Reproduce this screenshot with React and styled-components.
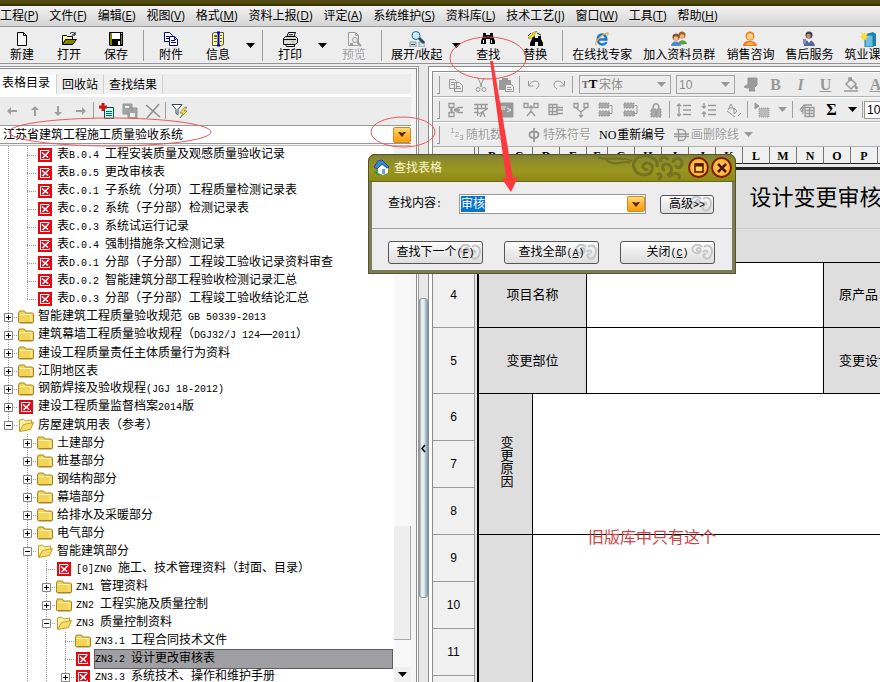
import { useEffect, useRef } from "react";
import styled, { createGlobalStyle, css } from "styled-components";

const menuItems = [
  ["工程", "P"],
  ["文件", "F"],
  ["编辑", "E"],
  ["视图", "V"],
  ["格式", "M"],
  ["资料上报", "D"],
  ["评定", "A"],
  ["系统维护", "S"],
  ["资料库", "L"],
  ["技术工艺", "J"],
  ["窗口", "W"],
  ["工具", "T"],
  ["帮助", "H"],
];

const toolItems = [
  { icon: "new", label: "新建" },
  { icon: "open", label: "打开" },
  { icon: "save", label: "保存" },
  "sep",
  { icon: "attach", label: "附件" },
  { icon: "info", label: "信息" },
  "arrow",
  "sep",
  { icon: "print", label: "打印" },
  "arrow",
  { icon: "preview", label: "预览", disabled: true },
  "sep",
  { icon: "expand", label: "展开/收起" },
  "arrow",
  { icon: "find", label: "查找" },
  { icon: "replace", label: "替换" },
  "sep",
  { icon: "ie", label: "在线找专家" },
  { icon: "group", label: "加入资料员群" },
  { icon: "sales", label: "销售咨询" },
  { icon: "service", label: "售后服务" },
  { icon: "course", label: "筑业课堂" },
];

const treeRows = [
  { depth: 1, guides: [0], kind: "form", label: "表B.0.4 工程安装质量及观感质量验收记录" },
  { depth: 1, guides: [0], kind: "form", label: "表B.0.5 更改审核表" },
  { depth: 1, guides: [0], kind: "form", label: "表C.0.1 子系统（分项）工程质量检测记录表" },
  { depth: 1, guides: [0], kind: "form", label: "表C.0.2 系统（子分部）检测记录表" },
  { depth: 1, guides: [0], kind: "form", label: "表C.0.3 系统试运行记录" },
  { depth: 1, guides: [0], kind: "form", label: "表C.0.4 强制措施条文检测记录" },
  { depth: 1, guides: [0], kind: "form", label: "表D.0.1 分部（子分部）工程竣工验收记录资料审查" },
  { depth: 1, guides: [0], kind: "form", label: "表D.0.2 智能建筑分部工程验收检测记录汇总" },
  { depth: 1, guides: [0], kind: "form", last: true, label: "表D.0.3 分部（子分部）工程竣工验收结论汇总" },
  { depth: 0, kind: "folder", toggle: "+", label: "智能建筑工程质量验收规范 GB 50339-2013" },
  { depth: 0, kind: "folder", toggle: "+", label: "建筑幕墙工程质量验收规程（DGJ32/J 124—2011）" },
  { depth: 0, kind: "folder", toggle: "+", label: "建设工程质量责任主体质量行为资料" },
  { depth: 0, kind: "folder", toggle: "+", label: "江阴地区表" },
  { depth: 0, kind: "folder", toggle: "+", label: "钢筋焊接及验收规程(JGJ 18-2012)" },
  { depth: 0, kind: "form", toggle: "+", label: "建设工程质量监督档案2014版" },
  { depth: 0, kind: "opened", toggle: "-", last: true, label: "房屋建筑用表（参考）" },
  { depth: 1, kind: "folder", toggle: "+", label: "土建部分" },
  { depth: 1, kind: "folder", toggle: "+", label: "桩基部分" },
  { depth: 1, kind: "folder", toggle: "+", label: "钢结构部分" },
  { depth: 1, kind: "folder", toggle: "+", label: "幕墙部分" },
  { depth: 1, kind: "folder", toggle: "+", label: "给排水及采暖部分" },
  { depth: 1, kind: "folder", toggle: "+", label: "电气部分" },
  { depth: 1, kind: "opened", toggle: "-", label: "智能建筑部分" },
  { depth: 2, guides: [1], kind: "form", label: "[0]ZN0 施工、技术管理资料（封面、目录）" },
  { depth: 2, guides: [1], kind: "folder", toggle: "+", label: "ZN1 管理资料" },
  { depth: 2, guides: [1], kind: "folder", toggle: "+", label: "ZN2 工程实施及质量控制" },
  { depth: 2, guides: [1], kind: "opened", toggle: "-", label: "ZN3 质量控制资料" },
  { depth: 3, guides: [1, 2], kind: "folder", label: "ZN3.1 工程合同技术文件" },
  { depth: 3, guides: [1, 2], kind: "form", selected: true, label: "ZN3.2 设计更改审核表" },
  { depth: 3, guides: [1, 2], kind: "form", toggle: "+", label: "ZN3.3 系统技术、操作和维护手册" },
];

const letters = "BCDEFGHIJKLMNOP";
const columnCount = 26;
const columns = Array.from({ length: columnCount }, (_, index) => letters[index] || "");

const bigIcons = {
  new: <path d="M3.5 1.5h6l3 3v10h-9zM9.500 1.500v3h3" fill="#fff" stroke="#000" />,
  open: (
    <g stroke="#000" strokeWidth="1">
      <path d="M1.500 13.500v-9h4l1 1h5v3" fill="#ffff9c" />
      <path d="M1.500 13.500l3-5h11l-4 5z" fill="#848400" />
      <path d="M9 2.500c2-1.500 4-1.500 5 1m0-2.500v3h-3" fill="none" />
    </g>
  ),
  save: (
    <g>
      <path d="M1 1h14v14H2l-1-1z" fill="#000" />
      <path d="M2 2h2v7H2zM13 4h1v9h-1zM2 9h2v5H2z" fill="#848400" />
      <path d="M4 2h8v6H4z" fill="#fff" />
      <path d="M10 10h2v4h-2z" fill="#fff" />
      <path d="M13 2h1v1h-1z" fill="#c0c0c0" />
    </g>
  ),
  attach: (
    <g fill="#fff" stroke="#000084">
      <path d="M1.500 1.500h5l3 3v6h-8z" />
      <path d="M3 5.500h3M3 7.500h4" />
      <path d="M6.500 5.500h5l3 3v6h-8z" />
      <path d="M8 9.500h4M8 11.500h5M11.500 6v2.500h2" />
    </g>
  ),
  info: (
    <g>
      <path d="M2.500 2.500l2-1h9v12l-2 1h-9z" fill="#ffff7c" stroke="#555" />
      <path d="M4 4h3v2H4zM4 7h3v1H4zM4 10h3v1H4zM10 4h2v1h-2zM10 7h2v1h-2zM10 10h2v1h-2z" fill="#666" />
      <path d="M8.500 1v14M7 1.500h3M7 14.500h3" stroke="#0000c8" strokeWidth="2" />
    </g>
  ),
  print: (
    <g stroke="#000">
      <path d="M4.500 6.500l2-5h7l-2 5z" fill="#fff" />
      <path d="M7 3.500h4M6.500 5h4" strokeWidth=".7" />
      <path d="M1.500 7.500l2-2h10l2 2v4l-2 2h-12z" fill="#d8d8d0" />
      <path d="M2 8.500h12M3.500 13.500h9v2h-8z" fill="#fff" />
      <path d="M10 11h2" stroke="#b8a800" strokeWidth="1" />
    </g>
  ),
  preview: (
    <g fill="none" stroke="#9c9c9c">
      <path d="M2.500 1.500h7l3 3v10h-10zM9.500 1.500v3h3" />
      <circle cx="9" cy="9" r="2.500" />
      <path d="M11 11l4 4M4 13h3" strokeWidth="2" />
    </g>
  ),
  expand: (
    <g>
      <path d="M1 11h6v5H1zM10 11h6v5h-6z" fill="#d5e5ec" stroke="#7f97a8" />
      <path d="M2 13.500h4" stroke="#345" />
      <path d="M10 7l5 5" stroke="#28485c" strokeWidth="3" />
      <circle cx="7" cy="4.500" r="4" fill="#bfefff" stroke="#315f80" />
      <path d="M5 4c0-1 1-2 2-2" stroke="#fff" fill="none" />
    </g>
  ),
  find: (
    <path d="M3 2h3v2h4V2h3v3l2 5v3h-5V8H6v5H1v-3l2-5zM3 9v3h1V9zM11 9v3h1V9z" fill="#000" fillRule="evenodd" />
  ),
  replace: (
    <g>
      <path d="M5 5h3v2h3V5h3v3l2 4v3h-5v-4H8v4H3v-3l2-4z" fill="#000" />
      <path d="M1 7l5-4-1-1 5-2-3 4 1 1-5 3z" fill="#f8ec00" stroke="#706800" strokeWidth=".5" />
      <path d="M10 2l4 2M1 5l3-3" stroke="#222" />
    </g>
  ),
  ie: (
    <g fill="none">
      <path d="M3.800 8.500h8.500C12 5 10.500 3.500 8 3.500 5.500 3.500 3.800 5.500 3.800 8.500s2 5 4.400 5c2 0 3.500-.8 4-2.500" stroke="#1b78d8" strokeWidth="2.600" />
      <path d="M2.500 14c-2 0-.5-5 5-9s8-4 6-1" stroke="#efb335" strokeWidth="1.300" />
    </g>
  ),
  group: (
    <g>
      <circle cx="11" cy="4" r="3.500" fill="#a0622b" />
      <circle cx="11" cy="5.500" r="2.300" fill="#f0b377" />
      <path d="M7 14c0-6 8-6 9-1z" fill="#5ea43c" />
      <circle cx="5" cy="6" r="3.500" fill="#88502b" />
      <circle cx="5" cy="7.500" r="2.300" fill="#f5bd8b" />
      <path d="M0 15c0-6 9-6 10 0z" fill="#4d8bd0" />
    </g>
  ),
  sales: (
    <g>
      <circle cx="8" cy="5" r="4.500" fill="#ef7b1c" />
      <circle cx="8" cy="5.500" r="3.200" fill="#ffd18d" />
      <path d="M1 15c0-7 13-7 14 0z" fill="#f47c20" />
      <path d="M4 14c2-4 6-4 8 0z" fill="#ffb765" />
    </g>
  ),
  service: (
    <g>
      <circle cx="8" cy="4" r="3.500" fill="#39404e" />
      <circle cx="7.500" cy="5" r="2.200" fill="#c69066" />
      <path d="M3 15c-1-7 9-9 11 0z" fill="#5367a1" />
      <path d="M6 9l2 3 2-3z" fill="#fff" />
      <path d="M2 8h3v5H2z" fill="#8590b1" />
    </g>
  ),
  course: (
    <g>
      <path d="M6 3l7-2 3 2v12H6z" fill="#1683b5" />
      <path d="M5 4h8v12H5z" fill="#69bddd" stroke="#197ba7" />
      <path d="M4 0l1 3 3-1-2 3 3 1-3 1 1 3-3-2-2 2V7L0 6l2-2-1-3 3 2z" fill="#ffda39" />
    </g>
  ),
};

const smallIcons = {
  copy: <path d="M1.500 2.500h5l2 2v7h-7zM3 5.500h3M3 7.500h4M6.500 5.500h5l3 3v6h-8zM8 9.500h4M8 11.500h5" />,
  cut: (
    <>
      <path d="M5 1l4 9M11 1L7 10" />
      <circle cx="5" cy="12.500" r="2" />
      <circle cx="11" cy="12.500" r="2" />
    </>
  ),
  paste: (
    <>
      <path d="M1 3h3V1h6v2h3v10H1z" fill="#9a9a9a" stroke="none" />
      <path d="M7.500 7.500h6l2 2v5h-8zM9 10.500h4M9 12.500h5" fill="#eee" />
    </>
  ),
  undo: <path d="M2.500 4v5h5M3 8c3-5 9-5 10-1 0 2-1 4-3 5" />,
  redo: <path d="M13.500 4v5h-5M13 8C10 3 4 3 3 7c0 2 1 4 3 5" />,
  brush: <path d="M5 1h9v7l-3 3 1 3H6l1-3H4l-3-1 4-3z" fill="#9a9a9a" />,
  bucket: (
    <>
      <path d="M3 7l5-5 5 5-5 5zM6 4V1h3M1 14h14" strokeWidth="1.500" />
      <path d="M12 8c2 1 3 3 2 4s-2-1-2-4z" fill="#999" />
    </>
  ),
  insertCol: <path d="M1 1.500h5v4H1zM1 10.500h5v4H1zM15 5.500h-5v5h5M6 8h6M6 8l3-2M6 8l3 2M3 7h1v2H3z" strokeWidth="1.300" />,
  grid: <path d="M1 2.500h14M1 6.500h14M1 10.500h5M4.500 2v12M8.500 2v5M12.500 2v5M7 15l3-5 2 5M6 12l8-5" strokeWidth="1.300" />,
  block: (
    <>
      <path d="M1 1h14v14H1z" fill="#999" />
      <path d="M3 5h5M3 7h4M9 6l4 2-4 2" stroke="#eee" />
    </>
  ),
  split: <path d="M1 1.500h4v4H1zM11 1.500h4v4h-4zM8 4v5M6 6l2-2 2 2M8 9l-4 5M8 9l4 5" strokeWidth="1.300" />,
  rows: <path d="M1 2.500h8v10H1zM1 5.500h8M1 9.500h8M4.500 2v11M9 5.500h6M8 8h7M9 11.500h6" strokeWidth="1.300" />,
  merge: <path d="M1 1.500h4v4H1zM11 1.500h4v4h-4zM3 6l5 4 5-4M8 9v6M6 13l2 2 2-2" strokeWidth="1.300" />,
  fill: (
    <>
      <path d="M1 1h10v5H1zM1 9h10v5H1z" fill="#aaa" strokeDasharray="2 1" />
      <path d="M12 3.500h2v8h-3M12 10l-2 2 2 2" />
    </>
  ),
  lock: (
    <>
      <path d="M3 7h10v8H3z" fill="#aaa" strokeDasharray="2 1" />
      <path d="M5 7c0-7 6-7 6 0M8 9v4" strokeWidth="1.500" />
    </>
  ),
  spacing: <path d="M3 2v12M1 4l2-2 2 2M1 12l2 2 2-2M7 3.500h8M7 8h8M7 12.500h8" strokeWidth="1.300" />,
  spacing2: <path d="M3 1v5M3 15v-5M1 4l2 2 2-2M1 12l2-2 2 2M7 3.500h8M7 8h8M7 12.500h8" strokeWidth="1.300" />,
  abc: <path d="M2 8l3-6 3 6M3 6h4M8 12V6l3 3-3 3zM15 11l-3 3M1 9l8 6" />,
  shade: (
    <>
      <path d="M5 6h10v9H5z" fill="#bbb" strokeDasharray="1 1" />
      <path d="M1 1v6l4-3z" fill="#999" />
    </>
  ),
  calc: <path d="M6 5.500h9v9H6zM6 8.500h9M10.500 6v8M6 11.500h9M1 8l4-5h8M2 10l4-6M4 12V6" strokeWidth="1.300" />,
  phi: <path d="M8 1v14M8 4.500C2 4.500 2 11 8 11s6-6.500 0-6.500z" strokeWidth="1.800" />,
  strike: <path d="M4.500 2.500v11h3c6 0 6-11 0-11H3M0 7h15M0 9.500h15" strokeWidth="1.300" />,
  arrowL: <path d="M7 4v3h6v2H7v3L3 8z" fill="#a0a0a0" stroke="none" />,
  arrowU: <path d="M4 7h3v6h2V7h3L8 3z" fill="#a0a0a0" stroke="none" />,
  arrowD: <path d="M4 9h3V3h2v6h3l-4 4z" fill="#a0a0a0" stroke="none" />,
  arrowR: <path d="M9 4v3H3v2h6v3l4-4z" fill="#a0a0a0" stroke="none" />,
  addForm: (
    <>
      <path d="M5.500 4.500h9v11h-9z" fill="#c8f4f0" stroke="#00544c" />
      <path d="M7 8.500h6M7 10.500h6M7 12.500h6" stroke="#006b60" />
      <path d="M4 0v8M0 4h8" stroke="#cc1414" strokeWidth="3" />
    </>
  ),
  copyForm: (
    <>
      <path d="M1 1h9v10H1zM6 5h9v10H6z" fill="#a5a5a5" stroke="#949494" />
      <path d="M3 3h4v2H3zM8 10h5v4H8z" fill="#eee" stroke="none" />
    </>
  ),
  remove: <path d="M1 2l14 12M14 1L2 15" stroke="#8f8f8f" strokeWidth="1.600" />,
  filter: (
    <>
      <path d="M1 1.500h10l-4 5v5l-2-1v-4z" fill="#fff" stroke="#34465a" />
      <path d="M14 4L9 10h3l-3 5 7-7h-3l3-4z" fill="#ffe94a" stroke="#6b6200" strokeWidth=".6" />
    </>
  ),
};

const treeIcons = {
  form: (
    <>
      <path d="M1 1h14v14H1z" fill="#e30613" />
      <path d="M12 5V3.500H3.500v9h9V11" fill="none" stroke="#fff" />
      <path d="M5 5.500l6 5M11.500 5l-6 6" stroke="#fff" strokeWidth="1.600" />
    </>
  ),
  folder: (
    <>
      <path d="M.5 4l1-2h5l1 2h7l1 1v8l-1 1h-13l-1-1z" fill="#f3d358" stroke="#a78425" />
      <path d="M2 5.500h11v7" fill="none" stroke="#fff3a5" />
      <path d="M2 13.500h13" stroke="#a78425" />
    </>
  ),
  opened: (
    <>
      <path d="M1.500 14V3l4-1 2 2 6-1v3" fill="#fff3a0" stroke="#c59b2b" />
      <path d="M1.500 14.500l4-7 10-2-3 7z" fill="#f8dc68" stroke="#c59b2b" />
    </>
  ),
};

function BigIcon({ name }) {
  return (
    <svg width="16" height="16" viewBox="0 0 16 16" aria-hidden="true">
      {bigIcons[name]}
    </svg>
  );
}

function SmallIcon({ name }) {
  return (
    <svg width="16" height="16" viewBox="0 0 16 16" fill="none" stroke="#999" aria-hidden="true">
      {smallIcons[name]}
    </svg>
  );
}

// Latin runs are set half as wide as a Chinese character
function MixedText({ text }) {
  return text
    .split(/([\x20-\x7e]+)/)
    .map((part, index) => (index % 2 ? <StyledHalf key={index}>{part}</StyledHalf> : part));
}

function Arrow({ color = "#000" }) {
  return (
    <svg width="9" height="5" viewBox="0 0 9 5" aria-hidden="true">
      <path d="M0 0h9L4.500 5z" fill={color} />
    </svg>
  );
}

function DropMark() {
  return (
    <StyledDrop>
      <svg width="8" height="5" viewBox="0 0 8 5" aria-hidden="true">
        <path d="M0 0h2l2 1 2-1h2L4 5z" fill="#5a1e00" />
      </svg>
    </StyledDrop>
  );
}

function Swirl() {
  return (
    <svg width="24" height="18" viewBox="0 0 24 18" fill="none" stroke="#c6c6c6" strokeWidth="2" aria-hidden="true">
      <path d="M9 7c-2 1-3-2-1-3 3-1 4 4 0 5S1 6 3 3s7-3 9 0M14 3c3-3 8-1 8 4 0 6-4 9-7 7s-1-5 1-4M13 8c2-3 5-1 4 1" />
    </svg>
  );
}

function Sidebar() {
  return (
    <StyledSidebar>
      <StyledSidebarInner>
        <StyledTabs>
          <StyledTab $active>表格目录</StyledTab>
          <StyledTab>回收站</StyledTab>
          <StyledTab>查找结果</StyledTab>
        </StyledTabs>
        <StyledTreeTools>
          <StyledSmallButton aria-label="左移"><SmallIcon name="arrowL" /></StyledSmallButton>
          <StyledSmallButton aria-label="上移"><SmallIcon name="arrowU" /></StyledSmallButton>
          <StyledSmallButton aria-label="下移"><SmallIcon name="arrowD" /></StyledSmallButton>
          <StyledSmallButton aria-label="右移"><SmallIcon name="arrowR" /></StyledSmallButton>
          <StyledDivider />
          <StyledSmallButton aria-label="新建表格"><SmallIcon name="addForm" /></StyledSmallButton>
          <StyledSmallButton aria-label="复制表格"><SmallIcon name="copyForm" /></StyledSmallButton>
          <StyledSmallButton aria-label="删除表格"><SmallIcon name="remove" /></StyledSmallButton>
          <StyledDivider />
          <StyledSmallButton aria-label="筛选"><SmallIcon name="filter" /></StyledSmallButton>
        </StyledTreeTools>
        <StyledLibrary>
          <StyledLibrarySelect aria-label="资料库">
            <option>江苏省建筑工程施工质量验收系统</option>
          </StyledLibrarySelect>
          <DropMark />
        </StyledLibrary>
        <StyledTreeArea>
          <StyledTree>
            {treeRows.map((row) => (
              <StyledTreeRow key={row.label}>
                {Array.from({ length: row.depth }, (_, level) => (
                  <StyledGuide key={level} $line={row.guides?.includes(level)} />
                ))}
                <StyledBranch $last={row.last}>
                  {row.toggle && (
                    <StyledToggle aria-label={row.toggle === "+" ? "展开" : "收起"}>
                      <svg width="9" height="9" viewBox="0 0 9 9" aria-hidden="true">
                        <path d="M.5.5h8v8h-8z" fill="#fff" stroke="#848484" />
                        <path d={row.toggle === "+" ? "M2 4.500h5M4.500 2v5" : "M2 4.500h5"} stroke="#000" />
                      </svg>
                    </StyledToggle>
                  )}
                </StyledBranch>
                <svg width="16" height="16" viewBox="0 0 16 16" aria-hidden="true">
                  {treeIcons[row.kind]}
                </svg>
                <StyledTreeLabel $selected={row.selected}>
                  <MixedText text={row.label} />
                </StyledTreeLabel>
              </StyledTreeRow>
            ))}
          </StyledTree>
          <StyledScroll>
            <StyledScrollEnd />
            <StyledTrack />
            <StyledThumb />
            <StyledTrackEnd />
            <StyledScrollEnd><Arrow /></StyledScrollEnd>
          </StyledScroll>
        </StyledTreeArea>
      </StyledSidebarInner>
    </StyledSidebar>
  );
}

function IconButtons({ names }) {
  return names.map((name, index) => (
    <StyledSmallButton key={index} aria-label={name}>
      <SmallIcon name={name} />
    </StyledSmallButton>
  ));
}

function FormatBars() {
  return (
    <StyledBars>
      <StyledBar>
        <StyledGrip />
        <IconButtons names={["copy", "cut", "paste"]} />
        <StyledDivider />
        <IconButtons names={["undo", "redo"]} />
        <StyledDivider />
        <StyledField $width={92}>
          <StyledFontMark><small>T</small>T</StyledFontMark>
          <StyledFieldSelect aria-label="字体" disabled><option>宋体</option></StyledFieldSelect>
          <Arrow color="#999" />
        </StyledField>
        <StyledField $width={59}>
          <StyledFieldSelect aria-label="字号" disabled><option>10</option></StyledFieldSelect>
          <Arrow color="#999" />
        </StyledField>
        <StyledGap />
        <IconButtons names={["brush"]} />
        <StyledLetter><b>B</b></StyledLetter>
        <StyledLetter><b><i>I</i></b></StyledLetter>
        <StyledLetter><u>U</u></StyledLetter>
        <IconButtons names={["bucket"]} />
        <StyledLetter><u>A</u></StyledLetter>
      </StyledBar>
      <StyledBar>
        <StyledGrip />
        <IconButtons names={["insertCol", "grid", "block", "split", "rows", "merge", "fill", "fill", "lock"]} />
        <StyledDivider />
        <IconButtons names={["spacing", "spacing2", "abc"]} />
        <StyledDivider />
        <IconButtons names={["shade"]} />
        <StyledArrowButton aria-label="底纹选项"><Arrow color="#999" /></StyledArrowButton>
        <StyledDivider />
        <IconButtons names={["calc"]} />
        <StyledLetter $dark>Σ</StyledLetter>
        <StyledArrowButton aria-label="求和选项"><Arrow /></StyledArrowButton>
        <StyledDivider />
        <StyledZoomInput aria-label="显示比例" defaultValue="100" />
      </StyledBar>
      <StyledBar>
        <StyledGrip />
        <StyledTextButton disabled $width={77}><StyledFraction><sup>1</sup>2<sub>3</sub></StyledFraction>随机数</StyledTextButton>
        <StyledTextButton disabled $width={73}><SmallIcon name="phi" />特殊符号</StyledTextButton>
        <StyledTextButton $width={75}><StyledNo>NO</StyledNo>重新编号</StyledTextButton>
        <StyledTextButton disabled $width={72}><SmallIcon name="strike" />画删除线</StyledTextButton>
        <StyledArrowButton aria-label="删除线选项"><Arrow color="#999" /></StyledArrowButton>
      </StyledBar>
    </StyledBars>
  );
}

function Sheet() {
  return (
    <StyledSheet>
      <colgroup>
        <StyledCol $width={42} />
        <StyledCol $width={4} />
        {columns.map((letter, index) => (
          <StyledCol key={index} $width={letter === "F" ? 21 : 27} />
        ))}
      </colgroup>
      <thead>
        <tr>
          <StyledColHead />
          <StyledColHead />
          {columns.map((letter, index) => (
            <StyledColHead key={index}>{letter}</StyledColHead>
          ))}
        </tr>
      </thead>
      <tbody>
        <StyledRow $height={65}>
          <StyledRowHead />
          <StyledMargin />
          <StyledTitleCell colSpan={columnCount}>设计变更审核表</StyledTitleCell>
        </StyledRow>
        <StyledRow $height={34}>
          <StyledRowHead />
          <StyledMargin />
          <StyledCell $shaded colSpan={columnCount} />
        </StyledRow>
        <StyledRow $height={65}>
          <StyledRowHead>4</StyledRowHead>
          <StyledMargin />
          <StyledCell $shaded colSpan={4}>项目名称</StyledCell>
          <StyledCell colSpan={9} />
          <StyledCell $shaded $left colSpan={13}>原产品日期</StyledCell>
        </StyledRow>
        <StyledRow $height={66}>
          <StyledRowHead>5</StyledRowHead>
          <StyledMargin />
          <StyledCell $shaded colSpan={4}>变更部位</StyledCell>
          <StyledCell colSpan={9} />
          <StyledCell $shaded $left colSpan={13}>变更设计</StyledCell>
        </StyledRow>
        {[6, 7, 8, 9, 10, 11, 12].map((number) => (
          <StyledRow key={number} $height={47}>
            <StyledRowHead>{number < 12 && number}</StyledRowHead>
            <StyledMargin />
            {number === 6 && (
              <>
                <StyledCell $shaded colSpan={2} rowSpan={3}>
                  <StyledVertical>变更原因</StyledVertical>
                </StyledCell>
                <StyledCell colSpan={24} rowSpan={3} />
              </>
            )}
            {number === 9 && (
              <>
                <StyledCell $shaded colSpan={2} rowSpan={4} />
                <StyledCell colSpan={24} rowSpan={4} />
              </>
            )}
          </StyledRow>
        ))}
      </tbody>
    </StyledSheet>
  );
}

function FindDialog() {
  const inputRef = useRef(null);

  useEffect(() => {
    inputRef.current.focus();
    inputRef.current.select();
  }, []);

  return (
    <StyledDialog role="dialog" aria-labelledby="find-title">
      <StyledDialogBar>
        <svg width="17" height="17" viewBox="0 0 17 17" aria-hidden="true">
          <path d="M1 13c3-3 12-3 15 0l-4 3H4z" fill="#3c9a35" />
          <path d="M5 8l5-4 5 5v5l-5 2-5-2z" fill="#fff" />
          <path d="M1 8l4-6 4-1 7 7-2 1-5-4-5 5z" fill="#3b89d5" stroke="#155093" />
          <path d="M9 10h3v5H9z" fill="#6aa3d8" />
        </svg>
        <StyledDialogTitle id="find-title">查找表格</StyledDialogTitle>
        <svg width="90" height="25" viewBox="0 0 90 25" fill="none" stroke="#74731f" strokeWidth="2" aria-hidden="true">
          <path d="M2 2c10 5 20-2 34 4M10 5c10 8 18-1 24 3" />
          <path d="M52 14c-3 2-7-2-4-5s10 0 8 6-13 7-17 0S40 0 50 1s12 6 11 11" strokeWidth="3" />
          <path d="M69 15c-4 0-3-6 1-6 7 0 7 9 1 11M61 20c4-4 6 3 1 4M77 8c0-6 9-6 9 0s-7 6-6 2M73 22c8-8 13-1 9 2M64 7c0-6 6-6 8-2" strokeWidth="3" />
        </svg>
        <StyledRoundButton aria-label="最大化">
          <svg width="10" height="10" viewBox="0 0 10 10" aria-hidden="true">
            <path d="M1 1h8v8H1z" fill="none" stroke="#541300" strokeWidth="1.500" />
            <path d="M1 2h8" stroke="#541300" strokeWidth="3" />
          </svg>
        </StyledRoundButton>
        <StyledRoundButton aria-label="关闭">
          <svg width="10" height="10" viewBox="0 0 10 10" aria-hidden="true">
            <path d="M1 1l8 8M9 1L1 9" stroke="#541300" strokeWidth="2.500" />
          </svg>
        </StyledRoundButton>
      </StyledDialogBar>
      <StyledDialogRow>
        <StyledFindLabel htmlFor="find-text"><MixedText text="查找内容:" /></StyledFindLabel>
        <StyledFindBox>
          <StyledFindInput id="find-text" ref={inputRef} defaultValue="审核" />
          <DropMark />
        </StyledFindBox>
        <StyledDialogButton $small>
          <span><MixedText text="高级>>" /></span>
          <Swirl />
        </StyledDialogButton>
      </StyledDialogRow>
      <StyledDialogActions>
        {[["查找下一个", "F"], ["查找全部", "A"], ["关闭", "C"]].map(([label, key]) => (
          <StyledDialogButton key={key}>
            <span>{label}<StyledHalf>(<u>{key}</u>)</StyledHalf></span>
            <Swirl />
          </StyledDialogButton>
        ))}
      </StyledDialogActions>
    </StyledDialog>
  );
}

export default function App() {
  return (
    <StyledApp lang="zh-CN">
      <GlobalStyle />
      <StyledCaption />
      <StyledMenu>
        {menuItems.map(([label, key]) => (
          <StyledMenuItem key={key}>{label}(<u>{key}</u>)</StyledMenuItem>
        ))}
      </StyledMenu>
      <StyledToolbar>
        {toolItems.map((item, index) => {
          if (item === "sep") return <StyledSeparator key={index} />;
          if (item === "arrow") {
            return <StyledArrowButton key={index} aria-label="更多"><Arrow /></StyledArrowButton>;
          }
          return (
            <StyledToolButton key={index} disabled={item.disabled}>
              <BigIcon name={item.icon} />
              {item.label}
            </StyledToolButton>
          );
        })}
      </StyledToolbar>
      <StyledWorkspace>
        <Sidebar />
        <StyledSplitter>
          <StyledHandle aria-label="收起目录">
            <svg width="5" height="9" viewBox="0 0 5 9" aria-hidden="true">
              <path d="M4 1L1 4.500 4 8" fill="none" stroke="#000" strokeWidth="1.500" />
            </svg>
          </StyledHandle>
        </StyledSplitter>
        <StyledDocument>
          <StyledDocumentInner>
            <FormatBars />
            <Sheet />
          </StyledDocumentInner>
        </StyledDocument>
      </StyledWorkspace>
      <FindDialog />
      <StyledMarks width="880" height="682" viewBox="0 0 880 682" aria-hidden="true">
        <g fill="none" stroke="#e8585c">
          <ellipse cx="110" cy="132" rx="101" ry="14" />
          <ellipse cx="403" cy="132" rx="32" ry="15" />
          <ellipse cx="488" cy="58" rx="38" ry="21" />
        </g>
        <path d="M490 61h3l20 117 5-1-7 15-9-13 4-1z" fill="#fc3a3e" />
      </StyledMarks>
      <StyledNote>旧版库中只有这个</StyledNote>
    </StyledApp>
  );
}

const GlobalStyle = createGlobalStyle`
  * {
    box-sizing: border-box;
  }
  body {
    margin: 0;
    overflow: hidden;
  }
  button, input, select {
    margin: 0;
    border: 0;
    padding: 0;
    background: none;
    color: inherit;
    font: inherit;
    outline: none;
  }
  svg {
    display: block;
    flex: none;
  }
`;

const StyledApp = styled.div`
  position: relative;
  display: flex;
  flex-direction: column;
  height: 100vh;
  overflow: hidden;
  background-color: #ececec;
  color: #000;
  font: 12px/16px "Liberation Sans", "Noto Sans CJK SC", sans-serif;
  white-space: nowrap;
`;

const StyledHalf = styled.span`
  font-family: "Liberation Mono", monospace;
  font-size: 10px;
  white-space: pre;
`;

const StyledCaption = styled.div`
  flex: none;
  height: 6px;
  border-bottom: 2px solid #3a3000;
  background-color: #504b10;
`;

const StyledMenu = styled.nav`
  display: flex;
  flex: none;
  gap: 11px;
  height: 21px;
  border-bottom: 1px solid #9c9c9c;
  background: linear-gradient(#f2f2f2, #d4d4d4);
`;

const StyledMenuItem = styled.button`
  flex: none;
  font-family: "Open Sans", "Noto Sans CJK SC", sans-serif;
`;

const StyledToolbar = styled.div`
  display: flex;
  flex: none;
  height: 37px;
  margin-left: -1px;
  border-bottom: 1px solid #949494;
  background-color: #ededed;
`;

const StyledToolButton = styled.button`
  display: flex;
  flex: none;
  flex-direction: column;
  align-items: center;
  min-width: 47px;
  padding: 4px 6px 0 5px;
  line-height: 16px;

  &:disabled {
    color: #9c9c9c;
    text-shadow: 1px 1px #fff;
  }
`;

const StyledSeparator = styled.span`
  flex: none;
  width: 1px;
  margin: 3px 4px 2px 3px;
  background-color: #9a9a9a;
`;

const StyledArrowButton = styled.button`
  display: flex;
  flex: none;
  align-items: center;
  justify-content: center;
  width: 17px;
`;

const StyledWorkspace = styled.main`
  display: flex;
  flex: 1;
  min-height: 0;
  padding-top: 2px;
`;

const StyledSidebar = styled.aside`
  display: flex;
  flex: 0 0 419px;
  border: 1px solid #999;
  border-width: 1px 1px 0 0;
  padding: 1px 1px 0 0;
  background-color: #fff;
`;

const StyledSidebarInner = styled.div`
  display: flex;
  flex: 1;
  flex-direction: column;
  min-width: 0;
  border: 1px solid #8c8c8c;
  border-width: 1px 1px 0 0;
  padding: 5px 5px 0 0;
  background-color: #f5f5f5;
`;

const StyledTabs = styled.div`
  display: flex;
  flex: none;
  align-items: flex-end;
  height: 20px;
  background-color: #ededed;
`;

const StyledTab = styled.button`
  height: 19px;
  border-right: 1px solid #d0d0d0;
  padding: 0 5px;
  background-color: #f0f0f0;

  ${({ $active }) =>
    $active &&
    css`
      height: 20px;
      padding: 0 6px 2px 2px;
      background-color: #fff;
    `}
`;

const StyledTreeTools = styled.div`
  display: flex;
  flex: none;
  align-items: center;
  height: 32px;
  border: solid #999;
  border-width: 0 0 1px;
  box-shadow: inset 0 3px #fff;
  padding-top: 2px;
  background-color: #ececec;
`;

const StyledSmallButton = styled.button`
  display: flex;
  flex: 0 0 25px;
  align-items: center;
  justify-content: center;

  ${StyledTreeTools} & {
    flex-basis: 23px;
  }
`;

const StyledDivider = styled.span`
  flex: none;
  width: 1px;
  height: 17px;
  margin: 0 1px;
  background-color: #a0a0a0;
`;

const StyledLibrary = styled.div`
  display: flex;
  flex: none;
  align-items: center;
  height: 18px;
  border-bottom: 1px solid #999;
  background-color: #fff;
`;

const StyledLibrarySelect = styled.select`
  flex: 1;
  min-width: 0;
  height: 16px;
  padding-left: 3px;
  appearance: none;
`;

const StyledDrop = styled.span`
  display: flex;
  flex: none;
  align-items: center;
  justify-content: center;
  width: 18px;
  height: 16px;
  border: 1px solid #ce8729;
  border-radius: 2px;
  background: linear-gradient(#ffdf7c, #ffb52e 50%, #f99e0c);
`;

const StyledTreeArea = styled.div`
  display: flex;
  flex: 1;
  min-height: 0;
  margin-top: 1px;
  border-top: 1px solid #b8b8b8;
  background-color: #fff;
`;

const StyledTree = styled.div`
  flex: 1;
  min-width: 0;
  overflow: hidden;
`;

const StyledTreeRow = styled.div`
  display: flex;
  align-items: center;
  height: 18px;
`;

const StyledGuide = styled.span`
  flex: none;
  width: 19px;
  height: 18px;
  background: ${({ $line }) =>
    $line
      ? "repeating-linear-gradient(#999 0 1px, transparent 1px 2px) 8px 0 / 1px 100% no-repeat"
      : "none"};
`;

const StyledBranch = styled.span`
  display: flex;
  flex: none;
  align-items: center;
  width: 18px;
  height: 18px;
  padding-left: 4px;
  background:
    repeating-linear-gradient(#999 0 1px, transparent 1px 2px) 8px 0 / 1px
      ${({ $last }) => ($last ? "50%" : "100%")} no-repeat,
    repeating-linear-gradient(90deg, #999 0 1px, transparent 1px 2px) 8px 9px / 10px 1px no-repeat;
`;

const StyledToggle = styled.button`
  width: 9px;
  height: 9px;
`;

const StyledTreeLabel = styled.span`
  margin-left: 3px;
  border: 1px solid transparent;

  ${({ $selected }) =>
    $selected &&
    css`
      flex: 1;
      margin-right: 1px;
      border-color: #5c5c5c;
      background-color: #a0a0a4;
    `}
`;

const StyledScroll = styled.div`
  display: flex;
  flex: 0 0 17px;
  flex-direction: column;
  background-color: #f8f8f8;
`;

const StyledScrollEnd = styled.span`
  display: flex;
  flex: 0 0 15px;
  align-items: center;
  justify-content: center;
  background-color: #f0f0f0;
`;

const StyledTrack = styled.span`
  flex: 1;
`;

const StyledThumb = styled.span`
  flex: 0 0 114px;
  border: 1px solid #aaa;
  border-width: 0 1px 1px 0;
  background-color: #eee;
`;

const StyledTrackEnd = styled.span`
  flex: 0 0 27px;
`;

const StyledSplitter = styled.div`
  flex: 0 0 9px;
  padding-top: 232px;
  background-color: #e8e8e8;
`;

const StyledHandle = styled.button`
  display: flex;
  align-items: center;
  justify-content: center;
  width: 9px;
  height: 300px;
  border: 1px solid #8c979e;
  border-radius: 3px;
  background: linear-gradient(90deg, #b8b0ac, #f4fbff 30%, #d3e5ee 60%, #8ba4b5);
`;

const StyledDocument = styled.section`
  display: flex;
  flex: 1;
  min-width: 0;
  border: 1px solid #8c8c8c;
  border-width: 1px 0 0 1px;
  padding: 4px 0 0 3px;
  background-color: #fff;
`;

const StyledDocumentInner = styled.div`
  flex: 1;
  min-width: 0;
  overflow: hidden;
  border: 1px solid #8c8c8c;
  border-width: 1px 0 0 1px;
`;

const StyledBars = styled.div`
  background-color: #ececec;
`;

const StyledBar = styled.div`
  display: flex;
  align-items: center;
  height: 25px;
  border-top: 1px solid #fff;
  border-bottom: 1px solid #b4b4b4;
  padding-left: 4px;
`;

const StyledGrip = styled.span`
  flex: none;
  width: 3px;
  height: 18px;
  margin-right: 3px;
  border-right: 1px solid #999;
  border-bottom: 1px solid #999;
`;

const StyledField = styled.span`
  display: flex;
  flex: none;
  align-items: center;
  width: ${({ $width }) => $width}px;
  height: 19px;
  margin-left: 5px;
  border: 1px solid #a4a4a4;
  padding: 0 4px 0 2px;
  color: #8c8c8c;
`;

const StyledFieldSelect = styled.select`
  flex: 1;
  min-width: 0;
  height: 16px;
  appearance: none;
  opacity: 1;
`;

const StyledFontMark = styled.b`
  width: 17px;
  color: #000;
  font-family: "Liberation Serif", serif;
  font-size: 13px;

  small {
    color: #666;
    font-size: 10px;
  }
`;

const StyledGap = styled.span`
  flex: 0 0 3px;
`;

const StyledLetter = styled.button`
  flex: 0 0 25px;
  color: ${({ $dark }) => ($dark ? "#000" : "#999")};
  font-family: "Liberation Serif", serif;
  font-size: 16px;
  font-weight: bold;
`;

const StyledZoomInput = styled.input`
  flex: 0 0 50px;
  height: 18px;
  border: 1px solid #999;
  padding-left: 2px;
  background-color: #fff;
`;

const StyledTextButton = styled.button`
  display: flex;
  flex: none;
  align-items: center;
  gap: 1px;
  width: ${({ $width }) => $width}px;
  padding-left: 6px;

  &:disabled {
    color: #999;
    text-shadow: 1px 1px #fff;
  }
`;

const StyledFraction = styled.span`
  width: 16px;
  font-size: 8px;
  line-height: 12px;

  sup, sub {
    font-size: 8px;
    line-height: 0;
  }
`;

const StyledNo = styled.span`
  font-family: "Liberation Serif", serif;
`;

const StyledSheet = styled.table`
  width: 1px;
  table-layout: fixed;
  border-collapse: separate;
  border-spacing: 0;
  background-color: #fff;
  font-size: 13px;
`;

const StyledCol = styled.col`
  width: ${({ $width }) => $width}px;
`;

const StyledColHead = styled.th`
  height: 17px;
  overflow: hidden;
  border-right: 1px solid #777;
  border-bottom: 1px solid #222;
  padding: 3px 0 0;
  background-color: #f0f0f0;
  font: bold 12px/13px "Liberation Serif", serif;
`;

const StyledRow = styled.tr`
  height: ${({ $height }) => $height}px;
`;

const StyledRowHead = styled.th`
  border-right: 1px solid #999;
  border-bottom: 1px solid #999;
  padding: 0;
  background-color: #f0f0f0;
  font-size: 12px;
  font-weight: normal;
`;

const StyledMargin = styled.td`
  border-right: 2px solid #000;
  padding: 0;
  background-color: #e4e4e4;
`;

const StyledCell = styled.td`
  overflow: hidden;
  border-right: 1px solid #000;
  border-bottom: 1px solid #000;
  padding: ${({ $left }) => ($left ? "0 0 0 15px" : "0")};
  background-color: ${({ $shaded }) => ($shaded ? "#dedede" : "#fff")};
  text-align: ${({ $left }) => ($left ? "left" : "center")};
`;

const StyledTitleCell = styled(StyledCell)`
  border-bottom-color: #ccc;
  box-shadow: inset 0 3px #e8e8e8, inset 0 6px #222;
  padding-top: 3px;
  background-color: #dedede;
  font-size: 22px;
`;

const StyledVertical = styled.span`
  display: inline-block;
  writing-mode: vertical-rl;
`;

const StyledDialog = styled.div`
  position: absolute;
  top: 154px;
  left: 368px;
  width: 368px;
  border: 4px solid #7c7c58;
  border-top: 0;
  border-radius: 7px 7px 0 0;
  outline: 1px solid #55552c;
  outline-offset: -1px;
  background-color: #ededed;
`;

const StyledDialogBar = styled.div`
  display: flex;
  align-items: center;
  height: 28px;
  margin: 0 -3px;
  border-bottom: 1px solid #66661c;
  border-radius: 6px 6px 0 0;
  padding: 0 3px 0 4px;
  background: linear-gradient(#7a7a38, #8c8b2d 20%, #9b9620 60%, #8e8815);
`;

const StyledDialogTitle = styled.span`
  flex: 1;
  padding-left: 4px;
  color: #fbf8d2;
`;

const StyledRoundButton = styled.button`
  display: flex;
  align-items: center;
  justify-content: center;
  width: 21px;
  height: 21px;
  margin-left: 2px;
  border: 2px solid #801c00;
  border-radius: 50%;
  background: radial-gradient(#ffda68, #f9a01f);
`;

const StyledDialogRow = styled.div`
  display: flex;
  align-items: center;
  height: 47px;
  border-bottom: 1px solid #a0a0a0;
  padding: 0 18px 2px 16px;
`;

const StyledFindLabel = styled.label`
  flex: 0 0 71px;
`;

const StyledFindBox = styled.span`
  display: flex;
  flex: 1;
  align-items: center;
  height: 20px;
  margin-right: 14px;
  border: 1px solid #999;
  padding-left: 1px;
  background-color: #fff;
`;

const StyledFindInput = styled.input`
  flex: 1;
  min-width: 0;
  height: 16px;

  &::selection {
    background-color: #0a74cf;
    color: #fff;
  }
`;

const StyledDialogActions = styled.div`
  display: flex;
  gap: 21px;
  padding: 12px 17px 6px 16px;
`;

const StyledDialogButton = styled.button`
  display: grid;
  flex: ${({ $small }) => ($small ? "0 0 54px" : "1")};
  align-items: center;
  height: ${({ $small }) => ($small ? 19 : 23)}px;
  overflow: hidden;
  border: 1px solid #555;
  border-radius: 3px;
  background: linear-gradient(#fff, #eee 40%, #dedede);

  > * {
    grid-area: 1 / 1;
  }

  > span {
    z-index: 1;
  }

  > svg {
    justify-self: end;
  }
`;

const StyledMarks = styled.svg`
  position: absolute;
  top: 0;
  left: 0;
  pointer-events: none;
`;

const StyledNote = styled.span`
  position: absolute;
  top: 528px;
  left: 588px;
  color: #cf4545;
  font-size: 16px;
  line-height: 20px;
`;
